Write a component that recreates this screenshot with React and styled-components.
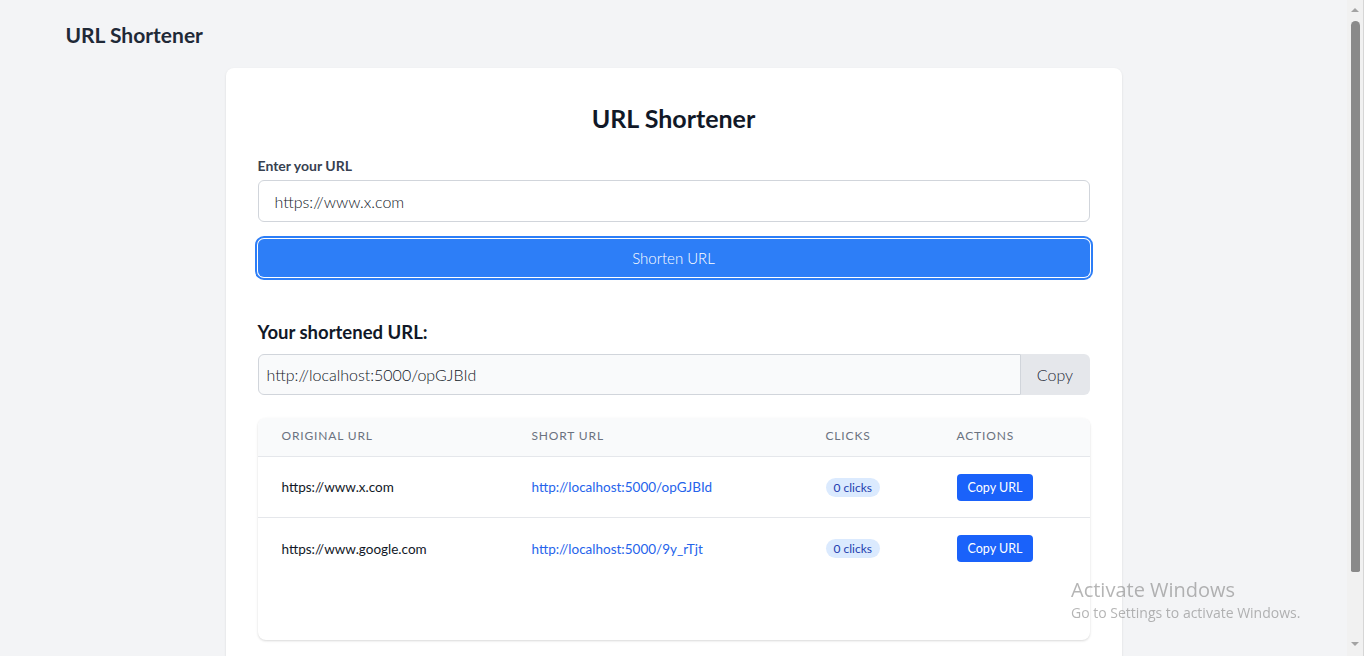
import styled, { createGlobalStyle } from "styled-components";

const GlobalStyle = createGlobalStyle`
    html, body {
        margin: 0;
        padding: 0;
        background: #f3f4f6;
        font-family: Lato, "Noto Sans", sans-serif;
        color: #111827;
    }
    * {
        box-sizing: border-box;
    }
`

const Page = styled.div`
    min-height: 100vh;
    margin-right: 17px;
    padding-bottom: 68px;
`

const Header = styled.header`
    max-width: 1280px;
    margin: 0 auto;
    padding: 21px 32px 0;
`

const Brand = styled.h1`
    margin: 0;
    font-size: 21px;
    line-height: 28px;
    font-weight: 700;
    color: #1f2937;
`

const Card = styled.main`
    max-width: 896px;
    margin: 19px auto 0;
    background: #fff;
    border-radius: 8px;
    box-shadow: 0 1px 3px rgba(0,0,0,0.08), 0 1px 2px rgba(0,0,0,0.04);
    padding: 32px;
`

const Title = styled.h2`
    margin: 0 0 20px;
    text-align: center;
    font-size: 25px;
    line-height: 36px;
    font-weight: 700;
    color: #111827;
`

const Label = styled.label`
    display: block;
    font-size: 14px;
    line-height: 20px;
    font-weight: 700;
    color: #374151;
    margin-bottom: 4px;
`

const TextInput = styled.input`
    display: block;
    width: 100%;
    height: 42px;
    padding: 0 16px;
    border: 1px solid #d1d5db;
    border-radius: 6px;
    font-family: Lato, "Noto Sans", sans-serif;
    font-weight: 300;
    font-size: 16px;
    color: #111827;
    outline: none;
`

const PrimaryButton = styled.button`
    display: block;
    width: 100%;
    height: 38px;
    margin-top: 17px;
    border: none;
    border-radius: 6px;
    background: #2d7ef7;
    color: #fff;
    font-family: Lato, "Noto Sans", sans-serif;
    font-weight: 300;
    font-size: 15px;
    box-shadow: 0 0 0 1px #fff, 0 0 0 3px #2d7ef7;
    cursor: pointer;
`

const ResultTitle = styled.h3`
    margin: 41px 0 8px;
    font-size: 18.5px;
    line-height: 28px;
    font-weight: 700;
    color: #111827;
`

const CopyGroup = styled.div`
    display: flex;
    height: 41px;
`

const ResultInput = styled.input`
    flex: 1;
    min-width: 0;
    padding: 0 8px;
    border: 1px solid #d1d5db;
    border-radius: 6px 0 0 6px;
    background: #f9fafb;
    font-family: Lato, "Noto Sans", sans-serif;
    font-size: 16px;
    font-weight: 300;
    color: #111827;
    outline: none;
`

const CopyButton = styled.button`
    width: 69px;
    border: none;
    border-radius: 0 6px 6px 0;
    background: #e5e7eb;
    color: #1f2937;
    font-family: Lato, "Noto Sans", sans-serif;
    font-weight: 300;
    font-size: 16px;
    cursor: pointer;
`

const TableBox = styled.div`
    margin-top: 23px;
    min-height: 222px;
    border-radius: 8px;
    overflow: hidden;
    box-shadow: 0 1px 3px rgba(0,0,0,0.1), 0 1px 2px rgba(0,0,0,0.06);
`

const Row = styled.div`
    display: grid;
    grid-template-columns: 250px 294px 131px 1fr;
    align-items: center;
    height: ${p => p.$head ? "39px" : "61px"};
    background: ${p => p.$head ? "#f9fafb" : "#fff"};
    border-bottom: 1px solid #e5e7eb;
    &:last-child {
        border-bottom: none;
    }
`

const HeadCell = styled.div`
    padding-left: 24px;
    padding-bottom: 3px;
    font-size: 12px;
    letter-spacing: 0.07em;
    text-transform: uppercase;
    color: #6b7280;
`

const Cell = styled.div`
    padding-left: 24px;
    font-size: 13.5px;
    color: #111827;
`

const Link = styled.a`
    color: #2563eb;
    text-decoration: none;
`

const Badge = styled.span`
    display: inline-block;
    padding: 2px 8px;
    border-radius: 999px;
    background: #dbeafe;
    color: #1e40af;
    font-size: 12px;
    font-weight: 400;
    line-height: 15px;
`

const SmallButton = styled.button`
    height: 27px;
    padding: 0 11px;
    border: none;
    border-radius: 4px;
    background: #1a62fa;
    color: #fff;
    font-family: Lato, "Noto Sans", sans-serif;
    font-size: 12.5px;
    font-weight: 400;
    cursor: pointer;
`

/* browser scrollbar, drawn over the right edge */
const ScrollTrack = styled.div`
    position: fixed;
    top: 0;
    right: 0;
    width: 17px;
    height: 100vh;
    background: #f1f1f1;
    border-right: 1px solid #d6d6d6;
    display: flex;
    flex-direction: column;
    align-items: center;
    padding: 8px 0 10px;
`

const Arrow = styled.div`
    width: 0;
    height: 0;
    border-left: 4px solid transparent;
    border-right: 4px solid transparent;
    ${p => p.$down
        ? "border-top: 4px solid #a3a3a3;"
        : "border-bottom: 4px solid #a3a3a3;"}
`

const Thumb = styled.div`
    width: 9px;
    height: 551px;
    margin: 9px 0 auto;
    background: #8a8a8a;
    border-radius: 5px 5px 2px 2px;
`

const Watermark = styled.div`
    position: fixed;
    left: 1071px;
    top: 577px;
    color: rgba(120,120,120,0.55);
    font-family: "Open Sans", sans-serif;
    pointer-events: none;
`

const WatermarkTitle = styled.div`
    font-size: 20px;
    line-height: 26px;
`

const WatermarkText = styled.div`
    font-size: 14px;
    line-height: 20px;
`

const links = [
    { original: "https://www.x.com", short: "http://localhost:5000/opGJBId", clicks: 0 },
    { original: "https://www.google.com", short: "http://localhost:5000/9y_rTjt", clicks: 0 },
]

const App = () => {
    return (
        <>
            <GlobalStyle />
            <Page>
                <Header>
                    <Brand>URL Shortener</Brand>
                </Header>
                <Card>
                    <Title>URL Shortener</Title>
                    <Label>Enter your URL</Label>
                    <TextInput defaultValue="https://www.x.com" />
                    <PrimaryButton>Shorten URL</PrimaryButton>

                    <ResultTitle>Your shortened URL:</ResultTitle>
                    <CopyGroup>
                        <ResultInput readOnly value="http://localhost:5000/opGJBId" />
                        <CopyButton>Copy</CopyButton>
                    </CopyGroup>

                    <TableBox>
                        <Row $head>
                            <HeadCell>Original URL</HeadCell>
                            <HeadCell>Short URL</HeadCell>
                            <HeadCell>Clicks</HeadCell>
                            <HeadCell>Actions</HeadCell>
                        </Row>
                        {links.map(l => (
                            <Row key={l.short}>
                                <Cell>{l.original}</Cell>
                                <Cell><Link href="#">{l.short}</Link></Cell>
                                <Cell><Badge>{l.clicks} clicks</Badge></Cell>
                                <Cell><SmallButton>Copy URL</SmallButton></Cell>
                            </Row>
                        ))}
                    </TableBox>
                </Card>
            </Page>
            <ScrollTrack>
                <Arrow />
                <Thumb />
                <Arrow $down />
            </ScrollTrack>
            <Watermark>
                <WatermarkTitle>Activate Windows</WatermarkTitle>
                <WatermarkText>Go to Settings to activate Windows.</WatermarkText>
            </Watermark>
        </>
    )
}

export default App;
